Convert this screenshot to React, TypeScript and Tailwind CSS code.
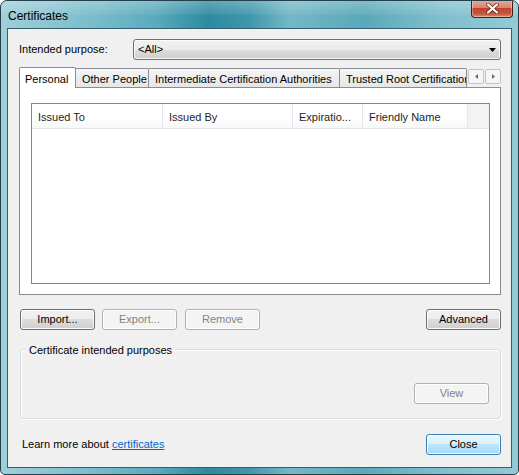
import React from "react";

const btn =
  "w-[75px] h-[21px] rounded-[3px] border flex items-center justify-center shadow-[inset_0_0_0_1px_rgba(255,255,255,0.85)]";
const btnNormal =
  "border-[#707070] text-black bg-[linear-gradient(to_bottom,#f2f2f2_0%,#ebebeb_50%,#dddddd_50%,#cfcfcf_100%)]";
const btnDisabled = "border-[#adb2b5] text-[#838383] bg-[#f4f4f4]";
const btnDefault =
  "border-[#3c7fb1] text-black bg-[linear-gradient(to_bottom,#eaf6fd_0%,#d9f0fc_50%,#bee6fd_50%,#a7d9f5_100%)] shadow-[inset_0_0_0_1px_rgba(255,255,255,0.6),inset_0_0_2px_1px_#8fd0f5]";

function Tab({ label, width, selected }: { label: string; width: number; selected?: boolean }) {
  if (selected) {
    return (
      <div
        className="h-[21px] -mb-px border border-b-0 border-[#898c95] bg-white flex items-start pt-[3px] pl-[5px] relative z-10 rounded-t-[2px] shrink-0"
        style={{ width }}
      >
        {label}
      </div>
    );
  }
  return (
    <div
      className="h-[19px] border border-b-0 border-l-0 border-[#898c95] bg-[linear-gradient(to_bottom,#f5f5f5,#e6e6e6)] flex items-start pt-[2px] pl-[6px] whitespace-nowrap overflow-hidden shrink-0 rounded-tr-[2px]"
      style={{ width }}
    >
      {label}
    </div>
  );
}

function HeaderCell({ label, width }: { label: string; width: number }) {
  return (
    <div
      className="h-full border-r border-[#e3e6ea] flex items-center pl-[6px] pt-[2px] text-[#1e1e1e] whitespace-nowrap overflow-hidden shrink-0"
      style={{ width }}
    >
      {label}
    </div>
  );
}

export default function App() {
  return (
    <div className="w-[519px] h-[475px] font-['Liberation_Sans',Arial,sans-serif] text-[11px] text-black bg-white">
      <div className="w-full h-full border border-[#23404b] rounded-t-[7px] rounded-b-[5px] bg-[linear-gradient(to_right,#9fcfda_0%,#79bccb_18%,#5aaabd_30%,#2c8aa0_40%,#3f97ab_48%,#74b8c7_56%,#5aa8ba_70%,#7fbfcd_85%,#93c9d5_100%)] flex flex-col px-[6px] pb-[6px] relative overflow-hidden">
        <div className="absolute inset-x-0 top-0 h-[14px] bg-[linear-gradient(to_bottom,rgba(255,255,255,0.25),rgba(255,255,255,0.05))] pointer-events-none" />
        {/* Title bar */}
        <div className="h-[27px] flex items-start relative">
          <div className="pl-[1px] pt-[6px] text-[12px] text-black">Certificates</div>
          <div className="ml-auto -mr-[1px] w-[42px] h-[18px] -mt-px rounded-b-[4px] border border-[#4a1c14] border-t-0 bg-[linear-gradient(to_bottom,#e8ab9c_0%,#d88370_45%,#c0432c_50%,#c9553b_80%,#e08a6a_100%)] shadow-[inset_0_0_0_1px_rgba(255,255,255,0.35)] flex items-center justify-center">
            <svg width="13" height="11" viewBox="0 0 13 11">
              <path d="M2 1.5 L11 9.5 M11 1.5 L2 9.5" stroke="#5a2216" strokeWidth="3.6" strokeLinecap="round" />
              <path d="M2 1.5 L11 9.5 M11 1.5 L2 9.5" stroke="#ffffff" strokeWidth="2.2" strokeLinecap="round" />
            </svg>
          </div>
        </div>
        {/* Client area */}
        <div className="flex-1 border border-[#35606d] bg-[#f0f0f0] flex flex-col">
          {/* Row 1 */}
          <div className="mt-[10px] flex items-center">
            <div className="pl-[11px] w-[125px]">Intended purpose:</div>
            <div className="w-[368px] h-[21px] rounded-[3px] border border-[#707070] bg-[linear-gradient(to_bottom,#f2f2f2_0%,#ebebeb_50%,#dddddd_50%,#cfcfcf_100%)] shadow-[inset_0_0_0_1px_rgba(255,255,255,0.85)] flex items-center pl-[4px] pr-[4px]">
              <span>&lt;All&gt;</span>
              <svg className="ml-auto" width="7" height="4" viewBox="0 0 7 4">
                <path d="M0 0 H7 L3.5 4 Z" fill="#000" />
              </svg>
            </div>
          </div>
          {/* Tabs */}
          <div className="mt-[7px] ml-[11px] w-[482px] h-[20px] flex items-end relative">
            <Tab label="Personal" width={57} selected />
            <Tab label="Other People" width={73} />
            <Tab label="Intermediate Certification Authorities" width={191} />
            <Tab label="Trusted Root Certification Authorities" width={127} />
            <div className="ml-auto mb-[3px] flex gap-[1px] self-end">
              <div className="w-[16px] h-[15px] border border-[#c0c3c8] rounded-[2px] bg-[#f6f6f6] flex items-center justify-center">
                <svg width="3" height="5" viewBox="0 0 3 5"><path d="M3 0 V5 L0 2.5 Z" fill="#6a6a6a" /></svg>
              </div>
              <div className="w-[16px] h-[15px] border border-[#c0c3c8] rounded-[2px] bg-[#f6f6f6] flex items-center justify-center">
                <svg width="3" height="5" viewBox="0 0 3 5"><path d="M0 0 V5 L3 2.5 Z" fill="#6a6a6a" /></svg>
              </div>
            </div>
          </div>
          {/* Panel */}
          <div className="ml-[11px] w-[482px] h-[208px] border border-[#898c95] bg-white pt-[15px] pl-[11px]">
            <div className="w-[459px] h-[181px] border border-[#828790] bg-white flex flex-col">
              <div className="h-[25px] flex border-b border-[#e5e5e5] bg-[linear-gradient(to_bottom,#ffffff_0%,#ffffff_60%,#f6f7f8_100%)]">
                <HeaderCell label="Issued To" width={131} />
                <HeaderCell label="Issued By" width={130} />
                <HeaderCell label="Expiratio..." width={70} />
                <HeaderCell label="Friendly Name" width={105} />
                <div className="flex-1 h-full bg-[#f2f3f4]" />
              </div>
            </div>
          </div>
          {/* Buttons */}
          <div className="mt-[14px] ml-[12px] w-[481px] flex">
            <div className={`${btn} ${btnNormal}`}>Import...</div>
            <div className={`${btn} ${btnDisabled} ml-[7px]`}>Export...</div>
            <div className={`${btn} ${btnDisabled} ml-[8px]`}>Remove</div>
            <div className={`${btn} ${btnNormal} ml-auto`}>Advanced</div>
          </div>
          {/* Group box */}
          <div className="mt-[19px] ml-[12px] w-[481px] h-[70px] border border-[#d5dfe5] rounded-[3px] shadow-[inset_1px_1px_0_#ffffff,1px_1px_0_#ffffff] relative flex flex-col">
            <div className="absolute left-[5px] -top-[8px] px-[3px] bg-[#f0f0f0]">Certificate intended purposes</div>
            <div className="mt-auto mb-[14px] ml-auto mr-[11px]">
              <div className={`${btn} ${btnDisabled}`}>View</div>
            </div>
          </div>
          {/* Bottom */}
          <div className="mt-[15px] ml-[14px] w-[479px] flex items-center">
            <div>
              Learn more about <span className="text-[#0066cc] underline">certificates</span>
            </div>
            <div className={`${btn} ${btnDefault} ml-auto`}>Close</div>
          </div>
        </div>
      </div>
    </div>
  );
}
